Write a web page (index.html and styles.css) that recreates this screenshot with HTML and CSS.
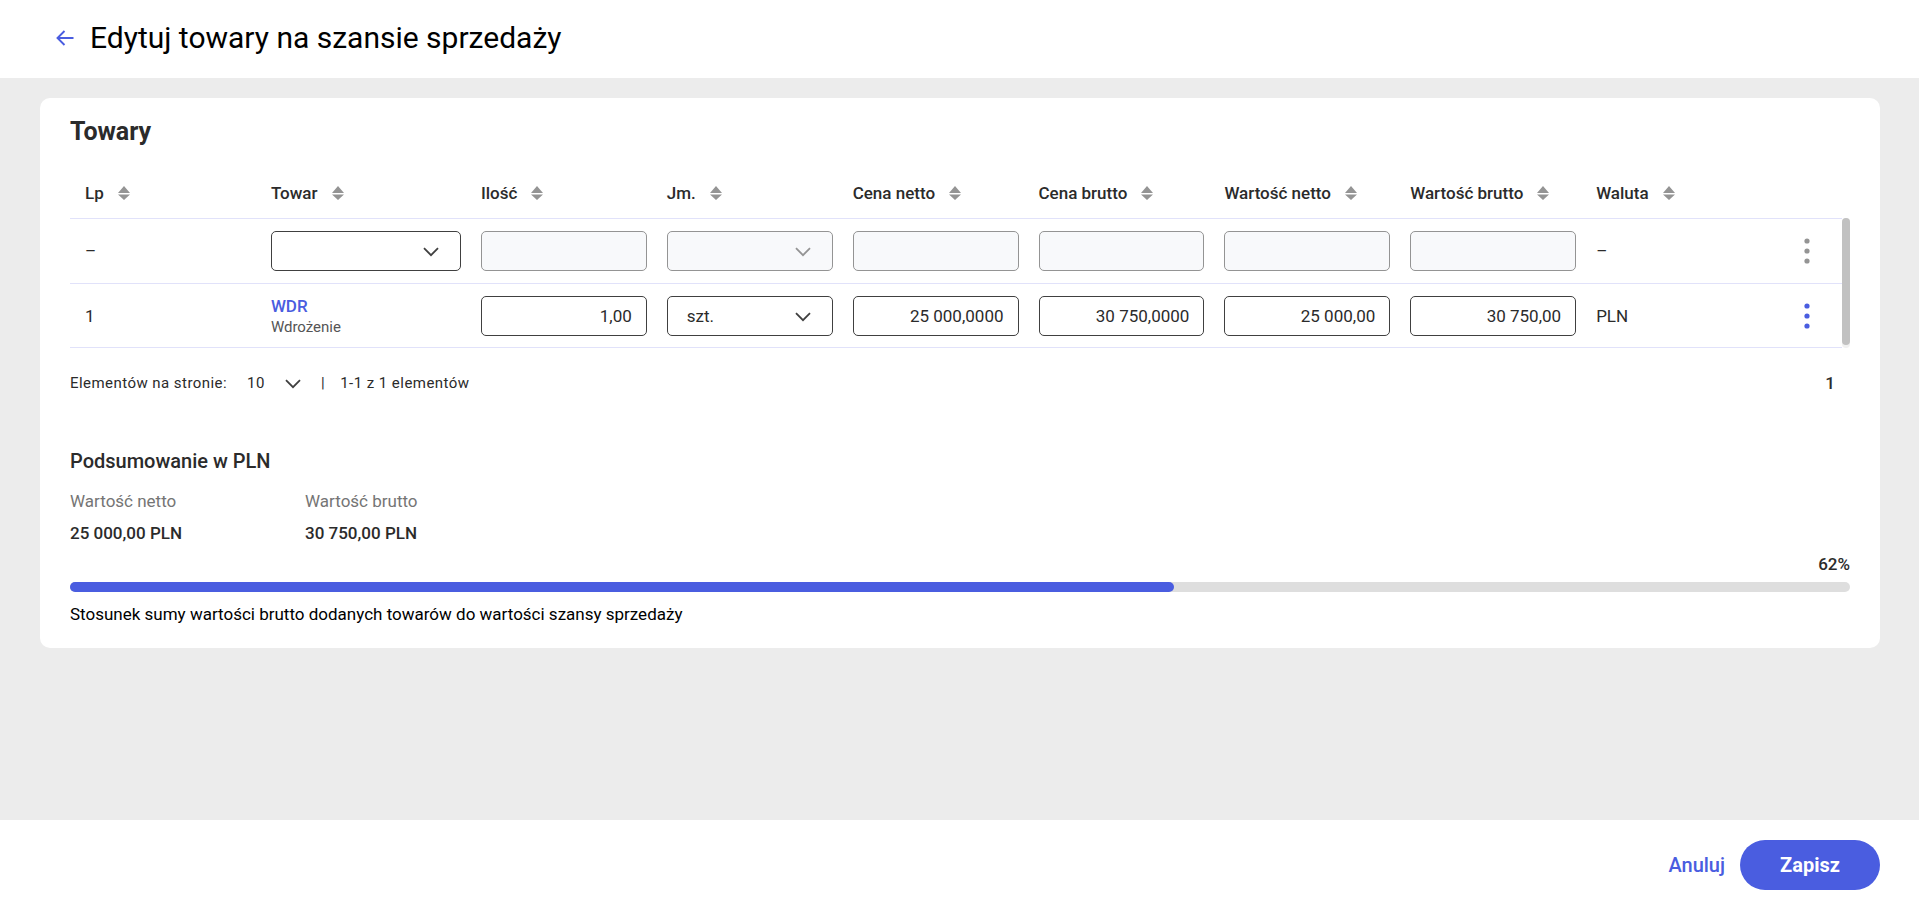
FILE: index.html
```html
<!DOCTYPE html>
<html lang="pl">
<head>
  <meta charset="UTF-8">
  <meta name="viewport" content="width=device-width, initial-scale=1.0">
  <title>Edytuj towary na szansie sprzedaży</title>
  <link rel="stylesheet" href="styles.css">
</head>
<body>
  <!-- shared icons -->
  <svg class="sprite" aria-hidden="true">
    <symbol id="sort" viewBox="0 0 12 14">
      <path d="M6 0l6 7H0zM6 14L0 8.5h12z" fill="#949494"/>
    </symbol>
    <symbol id="chevron" viewBox="0 0 16 10">
      <path d="M1 1.2l7 7 7-7" fill="none" stroke="currentColor" stroke-width="1.8"/>
    </symbol>
    <symbol id="dots" viewBox="0 0 6 26">
      <circle cx="3" cy="3" r="2.6"/>
      <circle cx="3" cy="13" r="2.6"/>
      <circle cx="3" cy="23" r="2.6"/>
    </symbol>
  </svg>

  <header class="header">
    <a class="back" href="#" aria-label="Wstecz">
      <svg width="18" height="16" viewBox="0 0 18 16" fill="none" stroke="currentColor" stroke-width="1.9">
        <path d="M17.500 8H2M8.500 1L1.500 8l7 7"/>
      </svg>
    </a>
    <h1>Edytuj towary na szansie sprzedaży</h1>
  </header>

  <main class="content">
    <section class="card">
      <h2>Towary</h2>

      <div class="table-wrap">
        <table class="items">
          <colgroup>
            <col>
            <col class="col-product">
            <col span="7">
            <col class="col-menu">
          </colgroup>
          <thead>
            <tr>
              <th><button class="sort">Lp <svg><use href="#sort"/></svg></button></th>
              <th><button class="sort">Towar <svg><use href="#sort"/></svg></button></th>
              <th><button class="sort">Ilość <svg><use href="#sort"/></svg></button></th>
              <th><button class="sort">Jm. <svg><use href="#sort"/></svg></button></th>
              <th><button class="sort">Cena netto <svg><use href="#sort"/></svg></button></th>
              <th><button class="sort">Cena brutto <svg><use href="#sort"/></svg></button></th>
              <th><button class="sort">Wartość netto <svg><use href="#sort"/></svg></button></th>
              <th><button class="sort">Wartość brutto <svg><use href="#sort"/></svg></button></th>
              <th><button class="sort">Waluta <svg><use href="#sort"/></svg></button></th>
              <th></th>
            </tr>
          </thead>
          <tbody>
            <tr class="new">
              <td>–</td>
              <td>
                <div class="select">
                  <select class="field" aria-label="Towar"><option></option></select>
                  <svg><use href="#chevron"/></svg>
                </div>
              </td>
              <td><input class="field" type="text" aria-label="Ilość" disabled></td>
              <td>
                <div class="select disabled">
                  <select class="field" aria-label="Jm." disabled><option></option></select>
                  <svg><use href="#chevron"/></svg>
                </div>
              </td>
              <td><input class="field" type="text" aria-label="Cena netto" disabled></td>
              <td><input class="field" type="text" aria-label="Cena brutto" disabled></td>
              <td><input class="field" type="text" aria-label="Wartość netto" disabled></td>
              <td><input class="field" type="text" aria-label="Wartość brutto" disabled></td>
              <td>–</td>
              <td><button class="menu" aria-label="Menu" disabled><svg><use href="#dots"/></svg></button></td>
            </tr>
            <tr>
              <td>1</td>
              <td>
                <a class="code" href="#">WDR</a>
                <span class="name">Wdrożenie</span>
              </td>
              <td><input class="field" type="text" aria-label="Ilość" value="1,00"></td>
              <td>
                <div class="select">
                  <select class="field" aria-label="Jm."><option>szt.</option></select>
                  <svg><use href="#chevron"/></svg>
                </div>
              </td>
              <td><input class="field" type="text" aria-label="Cena netto" value="25 000,0000"></td>
              <td><input class="field" type="text" aria-label="Cena brutto" value="30 750,0000"></td>
              <td><input class="field" type="text" aria-label="Wartość netto" value="25 000,00"></td>
              <td><input class="field" type="text" aria-label="Wartość brutto" value="30 750,00"></td>
              <td>PLN</td>
              <td><button class="menu" aria-label="Menu"><svg><use href="#dots"/></svg></button></td>
            </tr>
          </tbody>
        </table>
        <div class="scrollbar"><div class="thumb"></div></div>
      </div>

      <div class="pager">
        <label for="page-size">Elementów na stronie:</label>
        <div class="page-size">
          <select id="page-size"><option>10</option></select>
          <svg><use href="#chevron"/></svg>
        </div>
        <span class="divider">|</span>
        <span>1-1 z 1 elementów</span>
        <button class="page">1</button>
      </div>

      <h3>Podsumowanie w PLN</h3>
      <dl class="summary">
        <div>
          <dt>Wartość netto</dt>
          <dd>25 000,00 PLN</dd>
        </div>
        <div>
          <dt>Wartość brutto</dt>
          <dd>30 750,00 PLN</dd>
        </div>
      </dl>

      <div class="percent">62%</div>
      <div class="progress" role="progressbar" aria-valuenow="62" aria-valuemin="0" aria-valuemax="100" aria-labelledby="progress-text">
        <div class="progress-fill" style="width: 62%"></div>
      </div>
      <p class="caption" id="progress-text">Stosunek sumy wartości brutto dodanych towarów do wartości szansy sprzedaży</p>
    </section>
  </main>

  <footer class="footer">
    <button class="cancel">Anuluj</button>
    <button class="save">Zapisz</button>
  </footer>
</body>
</html>
```
FILE: styles.css
```css
* {
  box-sizing: border-box;
}

body {
  margin: 0;
  min-height: 100vh;
  display: flex;
  flex-direction: column;
  font-family: Roboto, "Liberation Sans", sans-serif;
  font-size: 17px;
  line-height: 20px;
  color: #2b2b2b;
  background: #ececec;
}

button,
input,
select {
  font: inherit;
  color: inherit;
}

button {
  padding: 0;
  border: none;
  background: none;
  cursor: pointer;
}

h1,
h2,
h3,
p,
dl,
dd {
  margin: 0;
}

.sprite {
  display: none;
}

.header {
  display: flex;
  align-items: center;
  gap: 16px;
  height: 78px;
  padding: 0 56px 2px;
  background: #fff;
  color: #000;
}

.header h1 {
  font-size: 30px;
  line-height: 36px;
  font-weight: 400;
}

.back {
  display: flex;
  color: #4a5de0;
}

.content {
  flex: 1;
  padding: 20px 39px 20px 40px;
}

.card {
  padding: 18px 30px 24px;
  border-radius: 10px;
  background: #fff;
}

.card h2 {
  font-size: 25px;
  line-height: 32px;
  font-weight: 700;
}

/* items table */
.table-wrap {
  display: flex;
  margin-top: 20px;
}

.items {
  flex: 1;
  width: 100%;
  table-layout: fixed;
  border-collapse: separate;
  border-spacing: 0;
}

.col-product {
  width: 210px;
}

.col-menu {
  width: 75px;
}

.items th,
.items td {
  padding: 0 5px 0 15px;
  border-bottom: 1px solid #e1e2fa;
  text-align: left;
}

.items th {
  height: 51px;
  white-space: nowrap;
}

.items td {
  height: 64px;
}

.items .new td {
  height: 65px;
}

.sort {
  display: flex;
  align-items: center;
  gap: 14px;
  font-weight: 500;
}

.sort svg {
  width: 12px;
  height: 14px;
}

.field {
  display: block;
  width: 100%;
  height: 40px;
  padding: 0 14px;
  border: 1px solid #404040;
  border-radius: 5px;
  background: #fff;
  text-align: right;
}

.field:disabled {
  border-color: #949494;
  background: #f8f9fb;
  opacity: 1;
}

.select {
  position: relative;
}

.select .field {
  padding: 0 19px;
  appearance: none;
  text-align: left;
}

.select svg {
  position: absolute;
  top: 16px;
  right: 22px;
  width: 16px;
  height: 10px;
  color: #404040;
  pointer-events: none;
}

.select.disabled svg {
  color: #949494;
}

.code {
  display: block;
  line-height: 22px;
  font-weight: 500;
  color: #4a5de0;
  text-decoration: none;
}

.name {
  display: block;
  font-size: 15px;
  color: #555;
}

.menu {
  display: flex;
  justify-content: center;
  width: 50px;
  fill: #4a5de0;
}

.menu:disabled {
  fill: #949494;
}

.menu svg {
  width: 6px;
  height: 26px;
}

.scrollbar {
  width: 8px;
  margin-top: 50px;
  padding-bottom: 3px;
  border-radius: 4px;
  background: #f1f1f1;
}

.thumb {
  height: 100%;
  border-radius: 4px;
  background: #c1c1c1;
}

/* pagination */
.pager {
  display: flex;
  align-items: center;
  height: 40px;
  margin-top: 15px;
  padding-right: 15px;
  font-size: 15px;
  letter-spacing: 0.03em;
}

.page-size {
  position: relative;
  margin-left: 20px;
}

.page-size select {
  display: block;
  width: 54px;
  padding: 0;
  border: none;
  background: none;
  appearance: none;
  letter-spacing: inherit;
}

.page-size svg {
  position: absolute;
  top: 6px;
  right: 0;
  width: 16px;
  height: 10px;
  color: #404040;
  pointer-events: none;
}

.divider {
  margin: 0 15px 0 20px;
}

.page {
  margin-left: auto;
  font-size: 17px;
  font-weight: 500;
}

/* summary */
.card h3 {
  margin-top: 46px;
  font-size: 20px;
  line-height: 24px;
  font-weight: 500;
}

.summary {
  display: flex;
  margin-top: 18px;
}

.summary div {
  width: 235px;
}

.summary dt {
  color: #757575;
}

.summary dd {
  margin-top: 12px;
  font-weight: 500;
}

.percent {
  margin-top: 11px;
  text-align: right;
  font-weight: 500;
}

.progress {
  height: 10px;
  margin-top: 8px;
  border-radius: 5px;
  background: #dedede;
}

.progress-fill {
  height: 100%;
  border-radius: 5px;
  background: #4a5de0;
}

.caption {
  margin-top: 12px;
  color: #000;
}

.footer {
  display: flex;
  align-items: flex-start;
  justify-content: flex-end;
  gap: 15px;
  padding: 20px 39px 17px 40px;
  background: #fff;
  font-size: 20px;
  line-height: 24px;
}

.cancel {
  height: 50px;
  font-weight: 500;
  color: #4a5de0;
}

.save {
  width: 140px;
  height: 50px;
  border-radius: 25px;
  background: #4a5de0;
  color: #fff;
  font-weight: 700;
}
```
